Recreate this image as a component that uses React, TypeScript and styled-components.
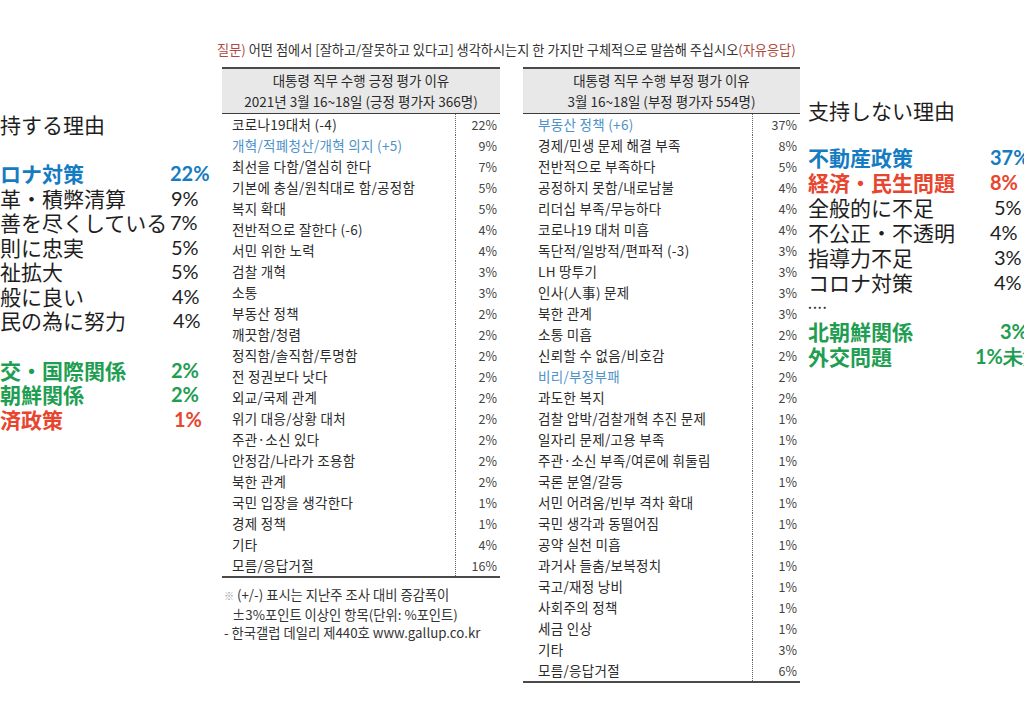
import styled, { createGlobalStyle } from "styled-components";

const GlobalStyle = createGlobalStyle`
	html,body{margin:0;padding:0;background:#fff;}
	body{font-family:"Noto Sans CJK KR","Noto Sans",sans-serif;}
`;

const Page = styled.div`
	display:flex;align-items:flex-start;width:1024px;height:712px;overflow:hidden;background:#fff;
`;

/* ---- japanese side columns ---- */

const SideCol = styled.div<{ $left?: boolean }>`
	flex:0 0 auto;box-sizing:border-box;
	width:${p => (p.$left ? "243px" : "216px")};
	margin-left:${p => (p.$left ? "-21px" : "8px")};
	padding-top:${p => (p.$left ? "111px" : "97px")};
	font-family:"Noto Sans CJK JP","Noto Sans",sans-serif;color:#1e1e1e;
`;

const SideTitle = styled.div`
	font-size:21px;line-height:26px;white-space:nowrap;
`;

const SideList = styled.div<{ $top: number }>`
	margin-top:${p => p.$top}px;
`;

const SideRow = styled.div<{ $col: number; $h: number; $tone?: string }>`
	display:grid;grid-template-columns:${p => p.$col}px auto;
	height:${p => p.$h}px;line-height:${p => p.$h}px;font-size:21px;white-space:nowrap;
	color:${p => p.$tone ?? "#1e1e1e"};font-weight:${p => (p.$tone ? 700 : 400)};
`;

const SidePct = styled.span<{ $shift?: number }>`
	font-family:Lato,"Open Sans",sans-serif;font-size:20px;
	margin-left:${p => p.$shift ?? 0}px;
`;

const Dots = styled.div`
	height:24px;line-height:18px;font-size:12px;font-weight:700;letter-spacing:1px;color:#333;
`;

/* ---- center tables ---- */

const Center = styled.div`
	flex:0 0 578px;padding-top:42px;
`;

const Question = styled.div`
	margin-left:-5px;font-size:13.2px;line-height:16px;color:#333;white-space:nowrap;
`;

const Accent = styled.span`
	color:#b04a3f;
`;

const Tables = styled.div`
	display:flex;align-items:flex-start;gap:23px;margin-top:9px;
`;

const TableCol = styled.div<{ $w: number }>`
	width:${p => p.$w}px;
`;

const Table = styled.div`
	border-top:2px solid #4a4a4a;
`;

const Head = styled.div`
	height:43px;padding-top:1px;background:#e8e8e8;border-bottom:1px solid #3d3d3d;
	text-align:center;font-size:13.5px;line-height:21px;color:#2a2a2a;white-space:nowrap;
`;

const Body = styled.div`
	border-bottom:2px solid #4a4a4a;
`;

const Row = styled.div<{ $pct: number; $pad: number; $blue?: boolean }>`
	display:grid;grid-template-columns:1fr ${p => p.$pct}px;height:21px;line-height:21px;font-size:13.5px;letter-spacing:0.3px;
	& > span:first-child{padding-left:${p => p.$pad}px;color:${p => (p.$blue ? "#4d92c8" : "#2b2b2b")};white-space:nowrap;}
`;

const Pct = styled.span`
	border-left:1px dotted #666;text-align:right;padding-right:3px;color:#444;font-size:12.5px;letter-spacing:0;
`;

const Notes = styled.div`
	margin-top:8px;padding-left:2px;font-size:13.3px;line-height:18.5px;color:#333;white-space:nowrap;
`;

const NoteIndent = styled.div`
	padding-left:8px;
`;

const Mark = styled.span`
	color:#999;font-size:10px;
`;

type Item = [string, string, boolean?];

const positive: Item[] = [
	["코로나19대처 (-4)", "22%"],
	["개혁/적폐청산/개혁 의지 (+5)", "9%", true],
	["최선을 다함/열심히 한다", "7%"],
	["기본에 충실/원칙대로 함/공정함", "5%"],
	["복지 확대", "5%"],
	["전반적으로 잘한다 (-6)", "4%"],
	["서민 위한 노력", "4%"],
	["검찰 개혁", "3%"],
	["소통", "3%"],
	["부동산 정책", "2%"],
	["깨끗함/청렴", "2%"],
	["정직함/솔직함/투명함", "2%"],
	["전 정권보다 낫다", "2%"],
	["외교/국제 관계", "2%"],
	["위기 대응/상황 대처", "2%"],
	["주관·소신 있다", "2%"],
	["안정감/나라가 조용함", "2%"],
	["북한 관계", "2%"],
	["국민 입장을 생각한다", "1%"],
	["경제 정책", "1%"],
	["기타", "4%"],
	["모름/응답거절", "16%"],
];

const negative: Item[] = [
	["부동산 정책 (+6)", "37%", true],
	["경제/민생 문제 해결 부족", "8%"],
	["전반적으로 부족하다", "5%"],
	["공정하지 못함/내로남불", "4%"],
	["리더십 부족/무능하다", "4%"],
	["코로나19 대처 미흡", "4%"],
	["독단적/일방적/편파적 (-3)", "3%"],
	["LH 땅투기", "3%"],
	["인사(人事) 문제", "3%"],
	["북한 관계", "3%"],
	["소통 미흡", "2%"],
	["신뢰할 수 없음/비호감", "2%"],
	["비리/부정부패", "2%", true],
	["과도한 복지", "2%"],
	["검찰 압박/검찰개혁 추진 문제", "1%"],
	["일자리 문제/고용 부족", "1%"],
	["주관·소신 부족/여론에 휘둘림", "1%"],
	["국론 분열/갈등", "1%"],
	["서민 어려움/빈부 격차 확대", "1%"],
	["국민 생각과 동떨어짐", "1%"],
	["공약 실천 미흡", "1%"],
	["과거사 들춤/보복정치", "1%"],
	["국고/재정 낭비", "1%"],
	["사회주의 정책", "1%"],
	["세금 인상", "1%"],
	["기타", "3%"],
	["모름/응답거절", "6%"],
];

const BLUE = "#167cc2";
const GREEN = "#1f9e52";
const RED = "#e8452e";

type Side = [string, string, string?, number?];

const leftTop: Side[] = [
	["コロナ対策", "22%", BLUE],
	["改革・積弊清算", "9%", undefined, 1],
	["最善を尽くしている", "7%"],
	["原則に忠実", "5%", undefined, 1],
	["福祉拡大", "5%", undefined, 1],
	["全般に良い", "4%", undefined, 2],
	["国民の為に努力", "4%", undefined, 3],
];

const leftBottom: Side[] = [
	["外交・国際関係", "2%", GREEN, 1],
	["北朝鮮関係", "2%", GREEN, 1],
	["経済政策", "1%", RED, 4],
];

const rightTop: Side[] = [
	["不動産政策", "37%", BLUE],
	["経済・民生問題", "8%", RED],
	["全般的に不足", "5%", undefined, 4],
	["不公正・不透明", "4%", undefined, 0],
	["指導力不足", "3%", undefined, 4],
	["コロナ対策", "4%", undefined, 4],
];

const rightBottom: Side[] = [
	["北朝鮮関係", "3%", GREEN, 10],
	["外交問題", "1%未満", GREEN, -15],
];

function PollTable({ title, sub, rows, pct, pad }: { title: string; sub: string; rows: Item[]; pct: number; pad: number }) {
	return (
		<Table>
			<Head>
				<div>{title}</div>
				<div>{sub}</div>
			</Head>
			<Body>
				{rows.map(([label, value, blue]) => (
					<Row key={label + value} $pct={pct} $pad={pad} $blue={blue}>
						<span>{label}</span>
						<Pct>{value}</Pct>
					</Row>
				))}
			</Body>
		</Table>
	);
}

function SideRows({ items, col, h }: { items: Side[]; col: number; h: number }) {
	return (
		<>
			{items.map(([label, value, tone, shift]) => (
				<SideRow key={label} $col={col} $h={h} $tone={tone}>
					<span>{label}</span>
					<SidePct $shift={shift}>{value}</SidePct>
				</SideRow>
			))}
		</>
	);
}

export default function App() {
	return (
		<>
			<GlobalStyle />
			<Page>
				<SideCol $left>
					<SideTitle>支持する理由</SideTitle>
					<SideList $top={24}>
						<SideRows items={leftTop} col={191} h={24.5} />
					</SideList>
					<SideList $top={25}>
						<SideRows items={leftBottom} col={191} h={24.5} />
					</SideList>
				</SideCol>

				<Center>
					<Question>
						<Accent>질문)</Accent> 어떤 점에서 [잘하고/잘못하고 있다고] 생각하시는지 한 가지만 구체적으로 말씀해 주십시오<Accent>(자유응답)</Accent>
					</Question>
					<Tables>
						<TableCol $w={278}>
							<PollTable title="대통령 직무 수행 긍정 평가 이유" sub="2021년 3월 16~18일 (긍정 평가자 366명)" rows={positive} pct={45} pad={10} />
							<Notes>
								<div><Mark>※</Mark> (+/-) 표시는 지난주 조사 대비 증감폭이</div>
								<NoteIndent>±3%포인트 이상인 항목(단위: %포인트)</NoteIndent>
								<div>- 한국갤럽 데일리 제440호 www.gallup.co.kr</div>
							</Notes>
						</TableCol>
						<TableCol $w={277}>
							<PollTable title="대통령 직무 수행 부정 평가 이유" sub="3월 16~18일 (부정 평가자 554명)" rows={negative} pct={48} pad={15} />
						</TableCol>
					</Tables>
				</Center>

				<SideCol>
					<SideTitle>支持しない理由</SideTitle>
					<SideList $top={22}>
						<SideRows items={rightTop} col={182} h={25} />
						<Dots>....</Dots>
						<SideRows items={rightBottom} col={182} h={24.5} />
					</SideList>
				</SideCol>
			</Page>
		</>
	);
}
